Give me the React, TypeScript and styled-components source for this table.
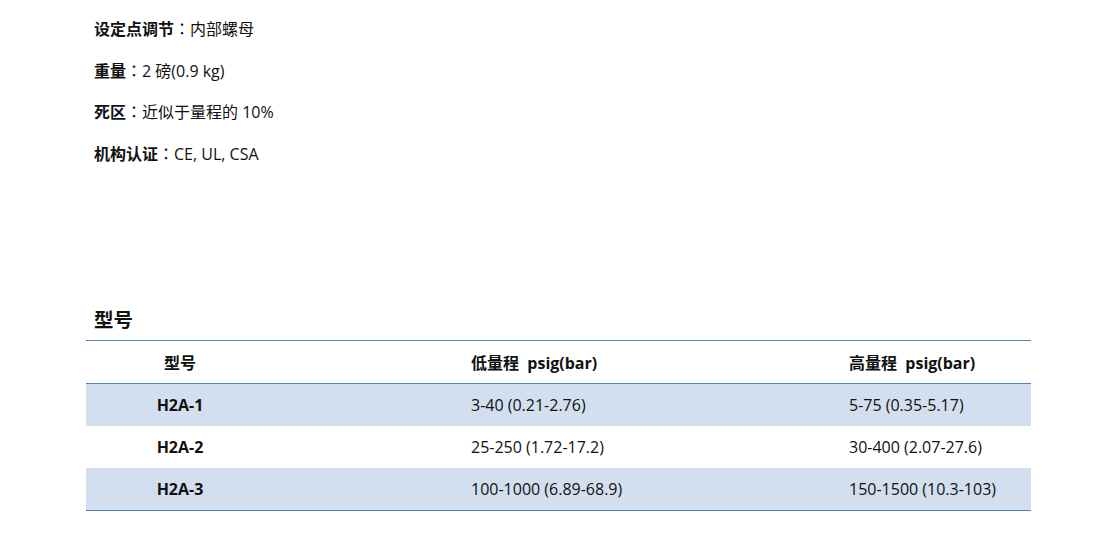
import React from "react";
import styled, { createGlobalStyle } from "styled-components";

const Global = createGlobalStyle`
  html, body { margin: 0; padding: 0; background: #fff; }
  body {
    font-family: "Open Sans", "Noto Sans CJK SC", sans-serif;
    color: #111;
    font-size: 16px;
  }
`;

const Page = styled.div`
  padding: 8px 87px 0 86px;
  width: 945px;
`;

const Specs = styled.div`
  padding: 9px 8px 0;
  display: flex;
  flex-direction: column;
  gap: 19.5px;
`;

const Line = styled.p`
  margin: 0;
  height: 22px;
  line-height: 22px;
  overflow: visible;
`;

const Label = styled.b`
  font-weight: 700;
`;

const Colon = styled.span`
  font-family: "Noto Sans CJK TC", sans-serif;
`;

const Heading = styled.h3`
  margin: 143.5px 0 0 8px;
  height: 26px;
  font-size: 19.5px;
  line-height: 26px;
  font-weight: 700;
`;

const Table = styled.div`
  margin-top: 7px;
  border-top: 1px solid #4f81bd;
  border-bottom: 1px solid #4f81bd;
`;

const Row = styled.div<{ $shade?: boolean; $head?: boolean }>`
  display: grid;
  grid-template-columns: 385px 378px 1fr;
  height: 42px;
  align-items: center;
  background: ${(p) => (p.$shade ? "#d3dfee" : "#fff")};
  border-bottom: ${(p) => (p.$head ? "1px solid #4f81bd" : "none")};
  font-weight: ${(p) => (p.$head ? 700 : 400)};
`;

const ModelCell = styled.div`
  text-align: center;
  padding-right: 197px;
  font-weight: 700;
`;

const Cell = styled.div``;

const rows = [
  ["H2A-1", "3-40 (0.21-2.76)", "5-75 (0.35-5.17)"],
  ["H2A-2", "25-250 (1.72-17.2)", "30-400 (2.07-27.6)"],
  ["H2A-3", "100-1000 (6.89-68.9)", "150-1500 (10.3-103)"],
];

export default function App() {
  return (
    <>
      <Global />
      <Page>
        <Specs>
          <Line><Label>设定点调节</Label><Colon>：</Colon>内部螺母</Line>
          <Line><Label>重量</Label><Colon>：</Colon>2 磅(0.9 kg)</Line>
          <Line><Label>死区</Label><Colon>：</Colon>近似于量程的 10%</Line>
          <Line><Label>机构认证</Label><Colon>：</Colon>CE, UL, CSA</Line>
        </Specs>
        <Heading>型号</Heading>
        <Table>
          <Row $head>
            <ModelCell>型号</ModelCell>
            <Cell>低量程&nbsp; psig(bar)</Cell>
            <Cell>高量程&nbsp; psig(bar)</Cell>
          </Row>
          {rows.map((r, i) => (
            <Row key={r[0]} $shade={i % 2 === 0}>
              <ModelCell>{r[0]}</ModelCell>
              <Cell>{r[1]}</Cell>
              <Cell>{r[2]}</Cell>
            </Row>
          ))}
        </Table>
      </Page>
    </>
  );
}
